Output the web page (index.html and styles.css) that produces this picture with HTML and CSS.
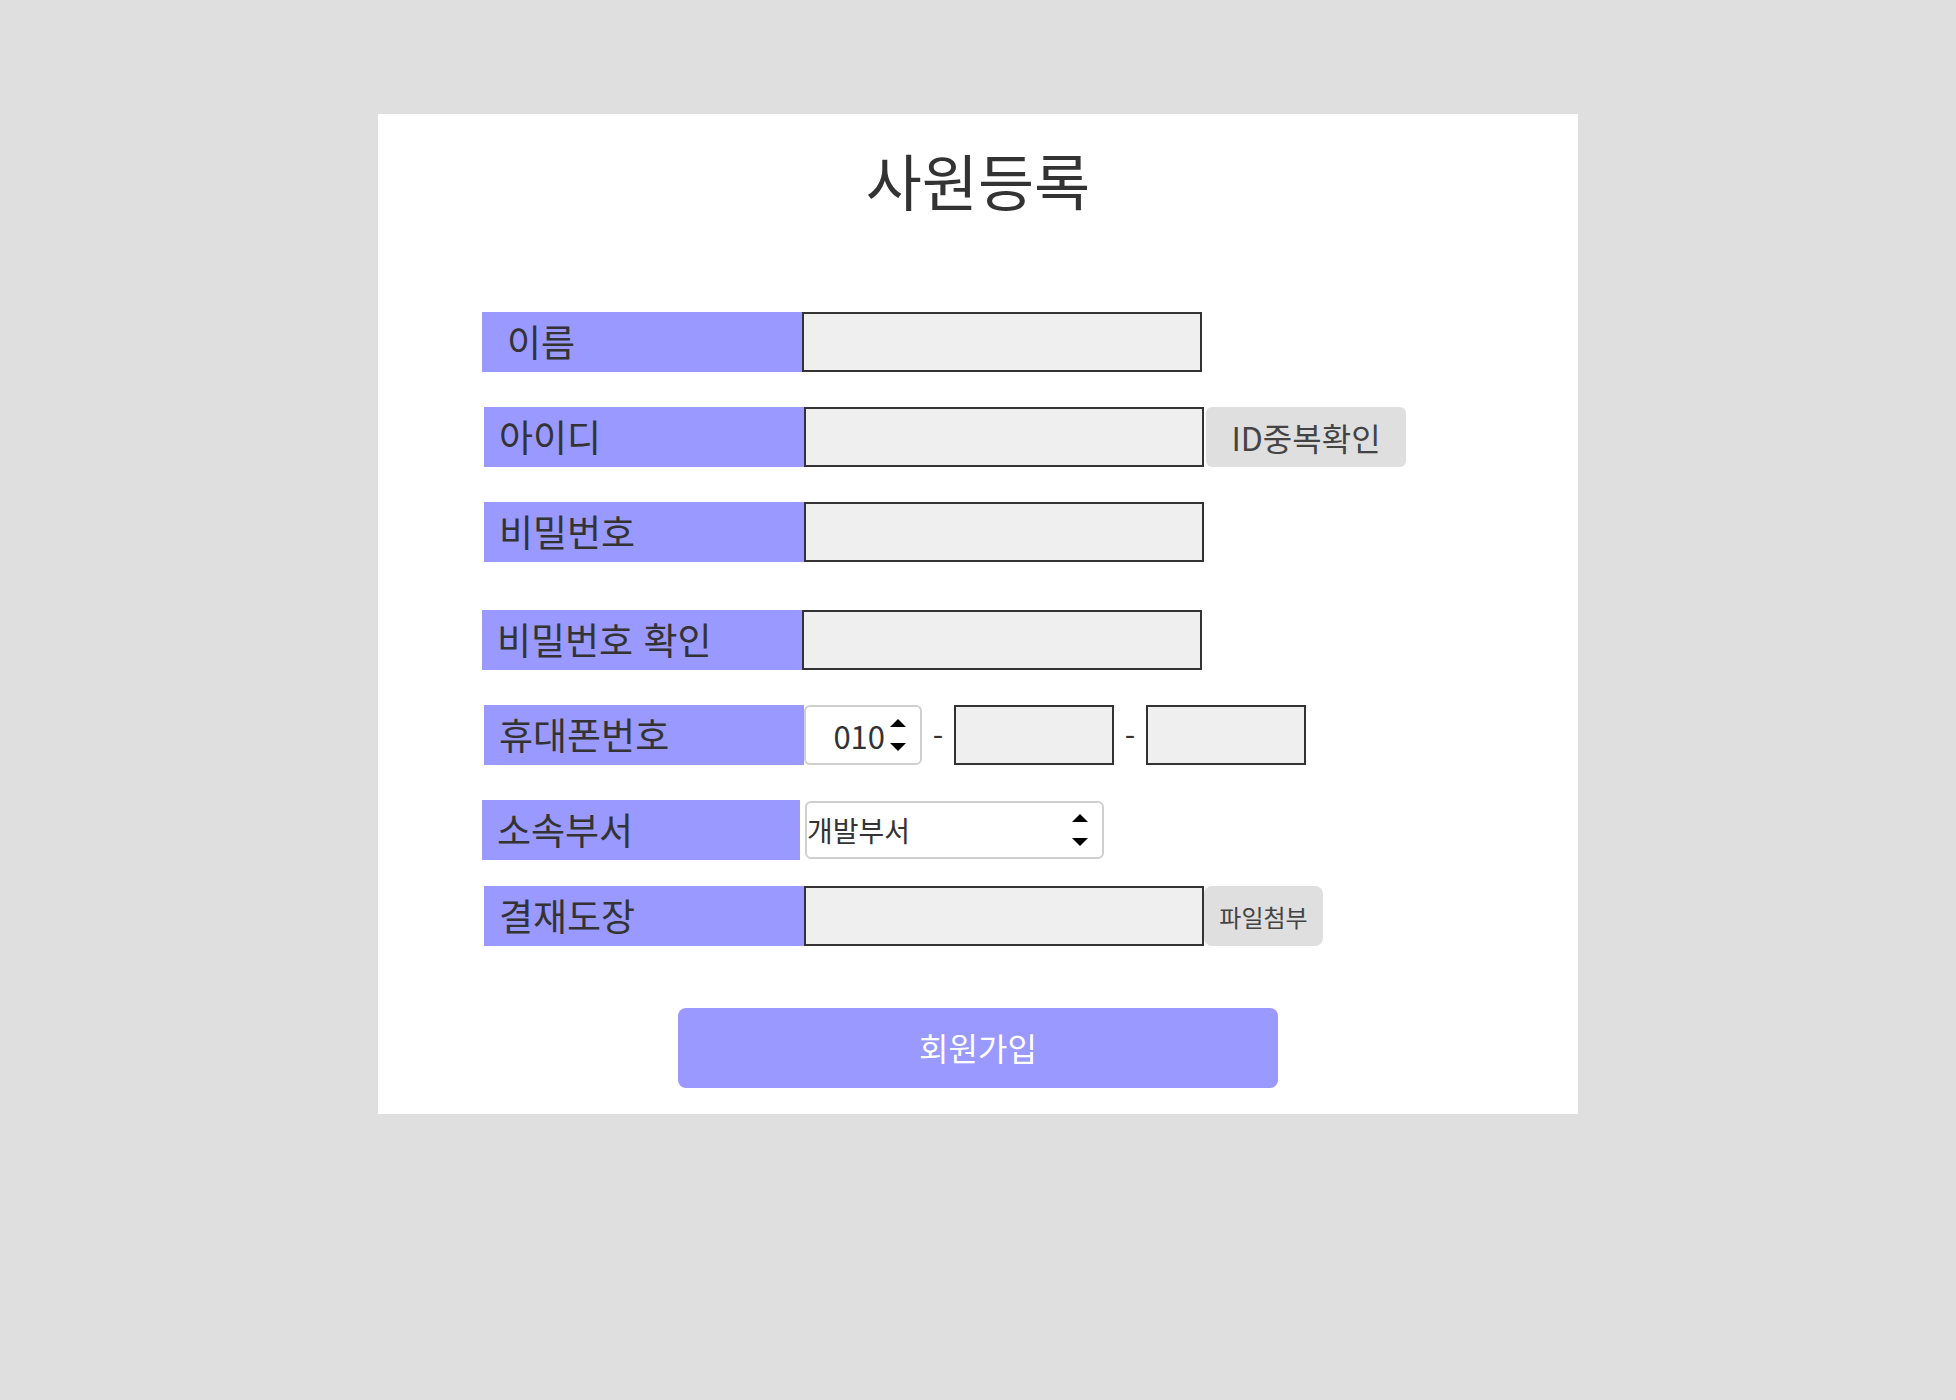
FILE: index.html
```html
<!DOCTYPE html>
<html lang="ko">

<head>
    <meta charset="UTF-8" />
    <meta name="viewport" content="width=device-width, initial-scale=1.0" />
    <title>사원등록</title>
    <link rel="stylesheet" href="styles.css">
</head>

<body>
    <div class="card">
        <h1>사원등록</h1>

        <form class="join-form">
            <div class="row">
                <label class="label label-name" for="name">이름</label>
                <input class="field" type="text" id="name" />
            </div>

            <div class="row nudge">
                <label class="label" for="userid">아이디</label>
                <input class="field" type="text" id="userid" />
                <button type="button" class="side-btn check-btn">ID중복확인</button>
            </div>

            <div class="row nudge">
                <label class="label" for="pw">비밀번호</label>
                <input class="field" type="password" id="pw" />
            </div>

            <div class="row gap-lg">
                <label class="label" for="pw2">비밀번호 확인</label>
                <input class="field" type="password" id="pw2" />
            </div>

            <div class="row nudge">
                <label class="label" for="phone1">휴대폰번호</label>
                <div class="phone">
                    <span class="select-wrap">
                        <select class="select select-phone" id="phone1">
                            <option>010</option>
                            <option>011</option>
                            <option>016</option>
                            <option>017</option>
                        </select>
                        <svg class="arrows" width="16" height="32" viewBox="0 0 16 32">
                            <path d="M8 0 L16 8 L0 8 Z" fill="#000" />
                            <path d="M0 24 L16 24 L8 32 Z" fill="#000" />
                        </svg>
                    </span>
                    <span class="dash">-</span>
                    <input class="field field-sm" type="text" />
                    <span class="dash">-</span>
                    <input class="field field-sm" type="text" />
                </div>
            </div>

            <div class="row">
                <label class="label label-dept" for="dept">소속부서</label>
                <span class="select-wrap dept-wrap">
                    <select class="select select-dept" id="dept">
                        <option>개발부서</option>
                        <option>영업부서</option>
                        <option>인사부서</option>
                    </select>
                    <svg class="arrows" width="16" height="32" viewBox="0 0 16 32">
                        <path d="M8 0 L16 8 L0 8 Z" fill="#000" />
                        <path d="M0 24 L16 24 L8 32 Z" fill="#000" />
                    </svg>
                </span>
            </div>

            <div class="row nudge gap-sm">
                <label class="label" for="stamp">결재도장</label>
                <input class="field" type="text" id="stamp" readonly />
                <button type="button" class="side-btn file-btn">파일첨부</button>
            </div>

            <button type="submit" class="submit-btn">회원가입</button>
        </form>
    </div>
</body>

</html>
```

FILE: styles.css
```css
body {
    margin: 0;
    padding-top: 114px;
    background: #dfdfdf;
    font-family: "Noto Sans CJK KR", "Noto Sans", sans-serif;
    color: #333;
}

.card {
    width: 1200px;
    margin: 0 auto;
    padding: 36px 0 26px;
    background: #fff;
    box-sizing: border-box;
}

h1 {
    margin: 0;
    font-size: 61px;
    font-weight: 400;
    line-height: 60px;
    text-align: center;
    color: #333;
}

.join-form {
    display: flex;
    flex-direction: column;
    padding-left: 104px;
    margin-top: 102px;
}

.row {
    display: flex;
    align-items: center;
    height: 60px;
    margin-top: 35px;
}

.row:first-child {
    margin-top: 0;
}

.row.nudge {
    margin-left: 2px;
}

.row.gap-lg {
    margin-top: 48px;
}

.row.gap-sm {
    margin-top: 26px;
}

.label {
    display: flex;
    align-items: center;
    width: 320px;
    height: 60px;
    padding: 0 0 2px 15px;
    box-sizing: border-box;
    background: #9999ff;
    font-size: 37px;
    color: #333;
}

.label-name {
    padding-left: 25px;
}

.label-dept {
    width: 318px;
}

input,
select,
button {
    font-family: inherit;
}

.field {
    width: 400px;
    height: 60px;
    box-sizing: border-box;
    border: 2px solid #333;
    background: #efefef;
    margin: 0;
    padding: 0 10px;
    font-size: 26px;
    outline: none;
}

.field-sm {
    width: 160px;
}

.side-btn {
    height: 60px;
    border: none;
    background: #dfdfdf;
    color: #444;
    cursor: pointer;
    padding: 0;
}

.check-btn {
    width: 200px;
    margin-left: 2px;
    font-size: 32px;
    border-radius: 6px;
}

.file-btn {
    width: 119px;
    font-size: 24px;
    border-radius: 8px;
}

.phone {
    display: flex;
    align-items: center;
    gap: 10px;
}

.dash {
    width: 12px;
    font-size: 30px;
    text-align: center;
    color: #333;
}

.select-wrap {
    position: relative;
    display: inline-flex;
}

.select {
    appearance: none;
    -webkit-appearance: none;
    height: 60px;
    box-sizing: border-box;
    border: 2px solid #cfcfcf;
    border-radius: 6px;
    background: #fff;
    color: #333;
    margin: 0;
}

.select-phone {
    width: 118px;
    font-size: 31px;
    padding: 0 35px 0 0;
    text-align: right;
    text-align-last: right;
}

.dept-wrap {
    margin-left: 5px;
}

.select-dept {
    width: 299px;
    height: 58px;
    font-size: 28px;
    padding: 0 40px 0 0;
}

.arrows {
    position: absolute;
    right: 16px;
    top: 14px;
    pointer-events: none;
}

.dept-wrap .arrows {
    top: 13px;
}

.submit-btn {
    align-self: center;
    width: 600px;
    height: 80px;
    margin: 62px 0 0 -104px;
    padding: 0 0 3px;
    border: none;
    border-radius: 8px;
    background: #9999ff;
    color: #fff;
    font-size: 32px;
    cursor: pointer;
}
```
